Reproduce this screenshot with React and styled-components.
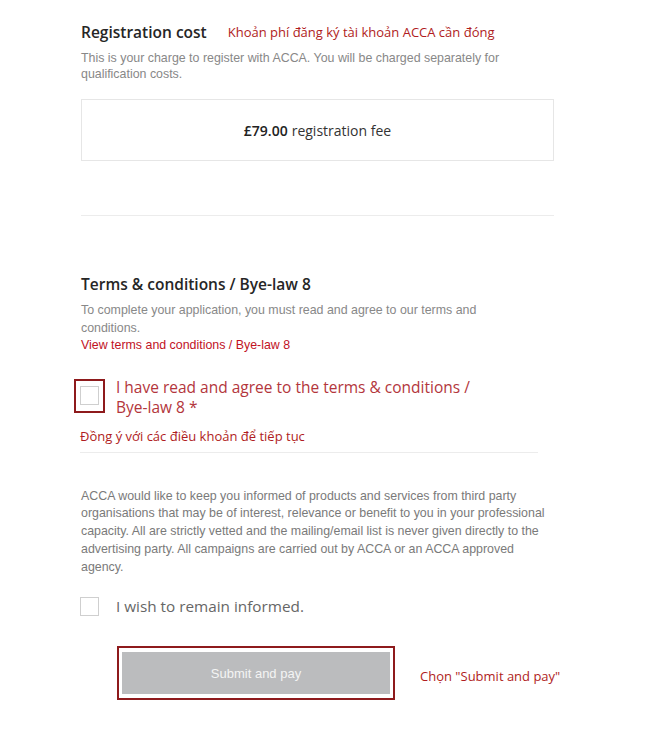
import React from "react";
import styled, { createGlobalStyle } from "styled-components";

const Global = createGlobalStyle`
  html, body { margin: 0; padding: 0; background: #ffffff; }
  body { font-family: "Liberation Sans", Arial, sans-serif; }
`;

const Page = styled.div`
  width: 647px;
  min-height: 729px;
  box-sizing: border-box;
  padding: 22px 0 0 81px;
  display: flex;
  flex-direction: column;
`;

const HeadingRow = styled.div`
  display: flex;
  align-items: center;
  height: 20px;
`;

const Heading = styled.h2`
  margin: ${(p) => p.$mt || 0}px 0 0;
  font-family: "Open Sans", sans-serif;
  font-weight: 600;
  font-size: 15.5px;
  line-height: 20px;
  color: #262626;
`;

const Note = styled.span`
  font-family: "Open Sans", sans-serif;
  font-size: 13px;
  line-height: 18px;
  color: #b01c22;
  margin-left: ${(p) => p.$ml || 0}px;
  margin-top: ${(p) => p.$mt || 0}px;
  display: block;
  white-space: nowrap;
`;

const Text = styled.p`
  margin: ${(p) => p.$mt || 0}px 0 0;
  font-family: "Liberation Sans", Arial, sans-serif;
  font-size: ${(p) => p.$fs || 12.4}px;
  line-height: ${(p) => p.$lh || 16}px;
  color: ${(p) => p.$color || "#888"};
  white-space: nowrap;
`;

const Link = styled.a`
  display: block;
  color: #c1121f;
  text-decoration: none;
`;

const FeeBox = styled.div`
  margin-top: 17px;
  width: 473px;
  height: 62px;
  box-sizing: border-box;
  border: 1px solid #e6e6e6;
  display: flex;
  align-items: center;
  justify-content: center;
  font-family: "Open Sans", sans-serif;
  font-size: 14px;
  color: #333;
  strong { font-weight: 600; color: #222; margin-right: 4px; }
`;

const Divider = styled.hr`
  margin: ${(p) => p.$mt || 0}px 0 0 ${(p) => p.$ml || 0}px;
  width: ${(p) => p.$w || 473}px;
  border: 0;
  height: 1px;
  background: #ececec;
`;

const CheckRow = styled.div`
  display: flex;
  align-items: flex-start;
  margin-top: ${(p) => p.$mt || 0}px;
  margin-left: ${(p) => p.$ml || 0}px;
`;

const Highlight = styled.div`
  box-sizing: border-box;
  border: 2px solid #8e1a1c;
  display: flex;
  align-items: center;
  justify-content: center;
  flex: none;
  margin-top: ${(p) => p.$mt || 0}px;
  padding: ${(p) => p.$pad || "0"};
  width: ${(p) => (p.$w ? `${p.$w}px` : "auto")};
  height: ${(p) => (p.$h ? `${p.$h}px` : "auto")};
`;

const Box = styled.span`
  display: block;
  width: 19px;
  height: 19px;
  box-sizing: border-box;
  border: 1px solid #cfcfcf;
  background: #fff;
  flex: none;
`;

const CheckLabel = styled.label`
  margin-left: ${(p) => p.$ml || 0}px;
  margin-top: ${(p) => p.$mt || 0}px;
  font-family: "Open Sans", sans-serif;
  font-size: ${(p) => p.$fs || 15.3}px;
  line-height: 20px;
  color: ${(p) => p.$color || "#666"};
  white-space: nowrap;
`;

const ButtonRow = styled.div`
  display: flex;
  align-items: center;
  margin: 30px 0 0 36px;
`;

const Button = styled.button`
  width: 268px;
  height: 42px;
  border: 0;
  background: #bbbcbe;
  color: #f4f4f4;
  font-family: "Liberation Sans", Arial, sans-serif;
  font-size: 13px;
  cursor: not-allowed;
`;

export default function App() {
  return (
    <>
      <Global />
      <Page>
        <HeadingRow>
          <Heading>Registration cost</Heading>
          <Note $ml={21}>Khoản phí đăng ký tài khoản ACCA cần đóng</Note>
        </HeadingRow>
        <Text $mt={8}>
          This is your charge to register with ACCA. You will be charged separately for
          <br />
          qualification costs.
        </Text>
        <FeeBox>
          <strong>£79.00</strong> registration fee
        </FeeBox>
        <Divider $mt={54} />

        <Heading $mt={58}>Terms &amp; conditions / Bye-law 8</Heading>
        <Text $mt={8} $lh={17.5}>
          To complete your application, you must read and agree to our terms and
          <br />
          conditions.
          <Link href="#">View terms and conditions / Bye-law 8</Link>
        </Text>
        <CheckRow $mt={22} $ml={-7}>
          <Highlight $mt={2} $w={31} $h={34}>
            <Box />
          </Highlight>
          <CheckLabel $ml={11} $fs={15.5} $color="#b3363c">
            I have read and agree to the terms &amp; conditions /
            <br />
            Bye-law 8 *
          </CheckLabel>
        </CheckRow>
        <Note $mt={10} $ml={-1}>Đồng ý với các điều khoản để tiếp tục</Note>
        <Divider $mt={7} $ml={-1} $w={458} />

        <Text $mt={35} $lh={17.75} $color="#7a7a7a">
          ACCA would like to keep you informed of products and services from third party
          <br />
          organisations that may be of interest, relevance or benefit to you in your professional
          <br />
          capacity. All are strictly vetted and the mailing/email list is never given directly to the
          <br />
          advertising party. All campaigns are carried out by ACCA or an ACCA approved
          <br />
          agency.
        </Text>
        <CheckRow $mt={21} $ml={-1}>
          <Box />
          <CheckLabel $ml={17} $mt={-1}>I wish to remain informed.</CheckLabel>
        </CheckRow>

        <ButtonRow>
          <Highlight $pad="4px 3px">
            <Button type="button" disabled>Submit and pay</Button>
          </Highlight>
          <Note $ml={25} $mt={6}>Chọn "Submit and pay"</Note>
        </ButtonRow>
      </Page>
    </>
  );
}
